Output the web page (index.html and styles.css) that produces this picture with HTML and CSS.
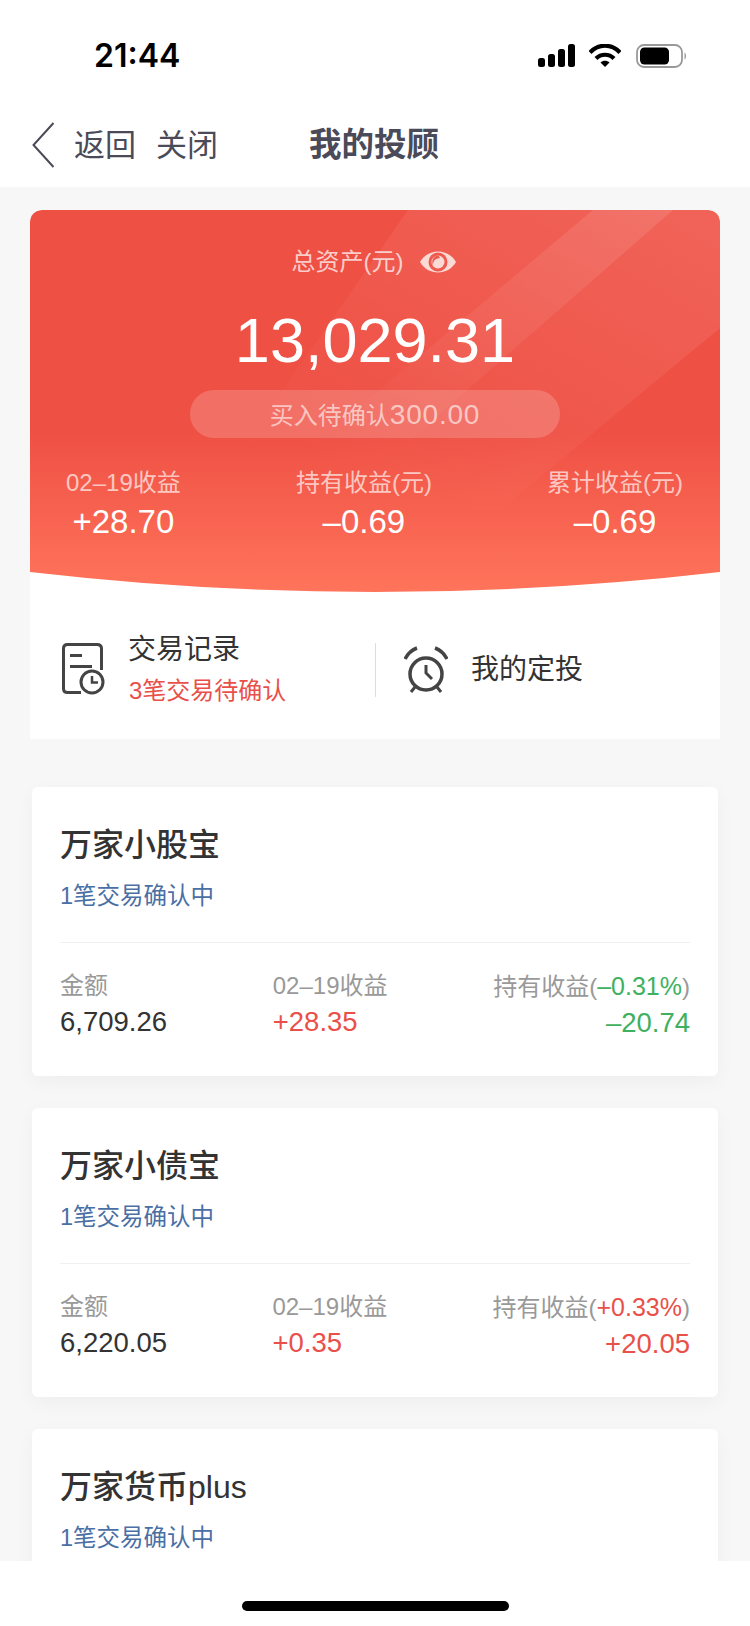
FILE: index.html
```html
<!DOCTYPE html>
<html lang="zh-CN">
<head>
<meta charset="utf-8">
<title>我的投顾</title>
<link rel="stylesheet" href="styles.css">
</head>
<body>
<div class="app">
  <header class="status">
    <span class="time">21:44</span>
    <div class="status-icons">
      <svg class="sig" width="37" height="23" viewBox="0 0 37 23"><rect x="0" y="14" width="7" height="9" rx="2.5"/><rect x="10" y="10" width="7" height="13" rx="2.5"/><rect x="20" y="5" width="7" height="18" rx="2.5"/><rect x="30" y="0" width="7" height="23" rx="2.5"/></svg>
      <svg class="wifi" width="32" height="23" viewBox="0 0 32 23"><path d="M1 8.5C9.500 -0.500 22.500 -0.500 31 8.500" fill="none" stroke="#000" stroke-width="4.200"/><path d="M7 14.500C12 9.500 20 9.500 25 14.500" fill="none" stroke="#000" stroke-width="4.200"/><path d="M11.500 18.500C14 16 18 16 20.500 18.500L16 23Z"/></svg>
      <svg class="bat" width="51" height="24" viewBox="0 0 51 24"><rect x="1" y="1" width="45" height="22" rx="7" fill="none" stroke="#999" stroke-width="1.800"/><rect x="4" y="3.500" width="29" height="17" rx="4.500"/><path d="M48.500 8.500C50.500 9.500 50.500 14.500 48.500 15.500Z" fill="#999"/></svg>
    </div>
  </header>

  <nav class="nav">
    <svg class="back" width="22" height="46" viewBox="0 0 22 46"><path d="M21.500 1L1.500 23L21.500 45" fill="none" stroke="#4a4a58" stroke-width="2"/></svg>
    <a class="nav-link first">返回</a>
    <a class="nav-link">关闭</a>
    <h1 class="nav-title">我的投顾</h1>
  </nav>

  <main class="content">
    <section class="summary">
      <div class="hero">
        <svg class="bands" width="690" height="382" viewBox="0 0 690 382">
          <defs>
            <linearGradient id="fadeA" x1="1" y1="0" x2="0.200" y2="0.800">
              <stop offset="0" stop-color="#fff" stop-opacity=".11"/>
              <stop offset=".45" stop-color="#fff" stop-opacity=".06"/>
              <stop offset="1" stop-color="#fff" stop-opacity="0"/>
            </linearGradient>
            <linearGradient id="fadeB" x1="1" y1="0" x2="0.100" y2="1">
              <stop offset="0" stop-color="#fff" stop-opacity=".11"/>
              <stop offset=".6" stop-color="#fff" stop-opacity=".05"/>
              <stop offset="1" stop-color="#fff" stop-opacity="0"/>
            </linearGradient>
          </defs>
          <polygon points="378,0 690,0 690,118 470,300 170,300" fill="url(#fadeA)"/>
          <polygon points="563,0 643,0 380,230 290,230" fill="url(#fadeB)"/>
        </svg>
        <div class="total-label">
          <span>总资产(元)</span>
          <svg class="eye" width="36" height="24" viewBox="0 0 36 24"><path d="M0 12C8 -2 28 -2 36 12C28 26 8 26 0 12Z" fill="#fbd9d4"/><circle cx="18" cy="12" r="9.500" fill="#ef5a4e"/><circle cx="18" cy="12" r="6.500" fill="#fbd9d4"/><path d="M18 5.500A6.500 6.500 0 0 0 13 15C13.500 10.500 15 8.500 20 8A6.500 6.500 0 0 0 18 5.500Z" fill="#ef5a4e"/></svg>
        </div>
        <div class="total">13,029.31</div>
        <div class="pending">买入待确认<span class="pending-num">300.00</span></div>
        <div class="stats">
          <div class="stat"><div class="stat-label">02–19收益</div><div class="stat-value">+28.70</div></div>
          <div class="stat"><div class="stat-label">持有收益(元)</div><div class="stat-value">–0.69</div></div>
          <div class="stat"><div class="stat-label">累计收益(元)</div><div class="stat-value">–0.69</div></div>
        </div>
      </div>
      <div class="actions">
        <a class="action action-left">
          <svg class="icon" width="44" height="52" viewBox="0 0 44 52"><path d="M19 49.500H5.500Q1.500 49.500 1.500 45.500V5.500Q1.500 1.500 5.500 1.500H35Q39.500 1.500 39.500 5.500V27" fill="none" stroke="#444" stroke-width="3"/><path d="M8 12.500H20M8 23.500H30" fill="none" stroke="#444" stroke-width="3"/><circle cx="30" cy="39" r="11" fill="none" stroke="#444" stroke-width="3"/><path d="M30 33V39.500H36" fill="none" stroke="#444" stroke-width="2.500"/></svg>
          <div>
            <div class="action-title">交易记录</div>
            <div class="action-note">3笔交易待确认</div>
          </div>
        </a>
        <a class="action action-right">
          <svg class="icon" width="44" height="48" viewBox="0 0 44 48"><circle cx="22" cy="28" r="16" fill="none" stroke="#444" stroke-width="3.500"/><path d="M1 13Q5 5 13 2M43 13Q39 5 31 2" fill="none" stroke="#444" stroke-width="3.500"/><path d="M22 19V27L28 33" fill="none" stroke="#444" stroke-width="3"/><path d="M7 46L11 41M37 46L33 41" fill="none" stroke="#444" stroke-width="3"/></svg>
          <div class="action-title">我的定投</div>
        </a>
      </div>
    </section>

    <section class="fund first-fund">
      <h2 class="fund-name">万家小股宝</h2>
      <div class="fund-note">1笔交易确认中</div>
      <div class="fund-row">
        <div class="cell"><div class="cell-label">金额</div><div class="cell-value">6,709.26</div></div>
        <div class="cell"><div class="cell-label">02–19收益</div><div class="cell-value up">+28.35</div></div>
        <div class="cell end"><div class="cell-label">持有收益(<span class="down rate">–0.31%</span>)</div><div class="cell-value down">–20.74</div></div>
      </div>
    </section>

    <section class="fund">
      <h2 class="fund-name">万家小债宝</h2>
      <div class="fund-note">1笔交易确认中</div>
      <div class="fund-row">
        <div class="cell"><div class="cell-label">金额</div><div class="cell-value">6,220.05</div></div>
        <div class="cell"><div class="cell-label">02–19收益</div><div class="cell-value up">+0.35</div></div>
        <div class="cell end"><div class="cell-label">持有收益(<span class="up rate">+0.33%</span>)</div><div class="cell-value up">+20.05</div></div>
      </div>
    </section>

    <section class="fund">
      <h2 class="fund-name">万家货币plus</h2>
      <div class="fund-note">1笔交易确认中</div>
    </section>
  </main>

  <footer class="home"><div class="home-bar"></div></footer>
</div>
</body>
</html>
```
FILE: styles.css
```css
* { box-sizing: border-box; }
html, body { margin: 0; padding: 0; }
body {
  background: #fff;
  font-family: "Liberation Sans", "Noto Sans CJK SC", sans-serif;
  color: #333;
}
.app { width: 750px; height: 1626px; display: flex; flex-direction: column; overflow: hidden; }

.status { height: 100px; flex: none; display: flex; justify-content: space-between; align-items: flex-start; padding: 38px 63px 0 94px; background: #fff; }
.time { font-family: "Inter", "Liberation Sans", sans-serif; font-size: 32px; font-weight: 600; line-height: 36px; color: #000; }
.status-icons { display: flex; align-items: flex-start; padding-top: 6px; }
.sig { margin-right: 14px; }
.wifi { margin-right: 15px; }

.nav { height: 87px; flex: none; display: flex; align-items: center; padding-left: 32px; background: #fff; color: #4a4a58; }
.back { margin-top: 2px; }
.nav-link { font-size: 31px; line-height: 44px; margin-left: 20px; margin-top: 4px; }
.nav-title { margin: 2px 0 0 91px; font-size: 32.500px; line-height: 44px; font-weight: 700; }

.content { flex: 1; min-height: 0; overflow: hidden; background: #f7f7f7; padding: 23px 30px 0; display: flex; flex-direction: column; }

.summary { flex: none; background: #fff; border-radius: 12px 12px 0 0; }
.hero {
  position: relative;
  height: 382px;
  border-radius: 12px 12px 0 0;
  background: linear-gradient(180deg, #ef5044 0%, #ef5044 58%, #ff745b 100%);
  clip-path: path("M0 12Q0 0 12 0H678Q690 0 690 12V362Q345 402 0 362Z");
  padding-top: 36px;
  color: #fff;
  text-align: center;
}
.bands { position: absolute; left: 0; top: 0; }
.total-label { position: relative; display: flex; justify-content: center; align-items: center; font-size: 24px; line-height: 32px; color: rgba(255,255,255,.72); padding-right: 2px; }
.eye { margin-left: 17px; }
.total { position: relative; margin-top: 26px; font-size: 63px; line-height: 72px; color: #fff; }
.pending { position: relative; width: 370px; height: 48px; margin: 14px auto 0; border-radius: 24px; background: rgba(255,255,255,.18); font-size: 24px; line-height: 50px; color: rgba(255,255,255,.62); }
.pending-num { font-size: 28px; letter-spacing: .8px; }
.stats { position: relative; display: flex; justify-content: space-between; padding: 0 37px 0 36px; margin-top: 29px; }
.stat-label { font-size: 24px; line-height: 32px; color: rgba(255,255,255,.68); }
.stat-value { margin-top: 3px; font-size: 33px; line-height: 40px; color: #fff; }

.actions { height: 147px; display: flex; align-items: center; padding-top: 8px; }
.action { display: flex; align-items: center; }
.action-left { flex: none; width: 346px; height: 54px; padding-left: 32px; border-right: 1px solid #ddd; }
.action-left .icon { margin-top: -2px; }
.action-right { padding-left: 28px; }
.action .icon { flex: none; margin-right: 22px; }
.action-right .icon { margin-right: 23px; }
.action-title { font-size: 28px; line-height: 40px; color: #333; }
.action-note { margin: 3px 0 0 1px; font-size: 24px; line-height: 36px; color: #e9504a; }

.fund { flex: none; height: 289px; margin: 32px 2px 0; padding: 36px 28px 0; background: #fff; border-radius: 6px; box-shadow: 0 6px 20px rgba(0,0,0,.04); }
.fund.first-fund { margin-top: 48px; }
.fund-name { margin: 0; font-size: 32px; line-height: 44px; font-weight: 500; color: #333; }
.fund-note { margin-top: 11px; font-size: 23.500px; line-height: 36px; color: #4a6fa5; }
.fund-row { display: flex; justify-content: space-between; margin-top: 28px; padding-top: 27px; border-top: 1px solid #f0f0f0; }
.cell.end { text-align: right; }
.cell-label { font-size: 24px; line-height: 32px; color: #999; }
.cell-value { margin-top: 2px; font-size: 27.500px; line-height: 36px; color: #333; }
.rate { font-size: 25px; }
.up { color: #e9504a; }
.down { color: #3fb05f; }

.home { height: 65px; flex: none; background: #fff; display: flex; justify-content: center; padding-top: 40px; }
.home-bar { width: 267px; height: 10px; border-radius: 5px; background: #000; }
```
